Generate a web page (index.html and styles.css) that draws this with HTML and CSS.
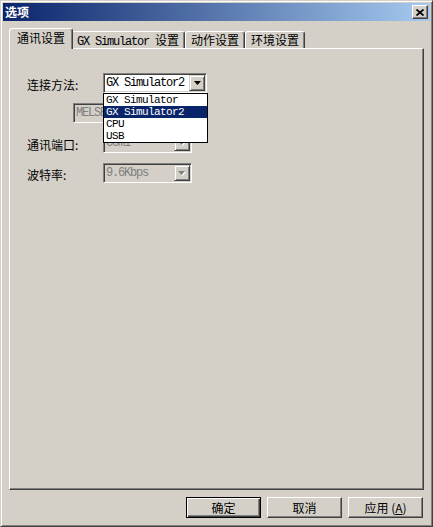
FILE: index.html
```html
<!DOCTYPE html>
<html>

<head>
    <meta charset="utf-8">
    <title>选项</title>
    <link rel="stylesheet" href="styles.css">
</head>

<body>
    <div class="window">
        <div class="titlebar">
            <span class="title">选项</span>
            <button class="close-btn">
                <svg width="8" height="7" viewBox="0 0 8 7">
                    <path d="M0.5 0.5 L7.5 6.5 M7.5 0.5 L0.5 6.5" stroke="#000" stroke-width="1.7" fill="none"/>
                </svg>
            </button>
        </div>

        <div class="content">
            <!-- tab strip -->
            <div class="tabs">
                <div class="tab active">通讯设置</div>
                <div class="tab"><span class="en">GX Simulator </span>设置</div>
                <div class="tab">动作设置</div>
                <div class="tab">环境设置</div>
            </div>

            <div class="panel">
                <div class="row">
                    <label class="label">连接方法:</label>
                    <div class="combo">
                        <span class="combo-text en">GX Simulator2</span>
                        <span class="arrow-btn">
                            <svg width="7" height="4" viewBox="0 0 7 4"><polygon points="0,0 7,0 3.5,4" fill="#000"/></svg>
                        </span>
                        <ul class="dropdown">
                            <li class="en">GX Simulator</li>
                            <li class="en selected">GX Simulator2</li>
                            <li class="en">CPU</li>
                            <li class="en">USB</li>
                        </ul>
                    </div>
                </div>

                <div class="row">
                    <div class="edit en">MELSEC</div>
                </div>

                <div class="row">
                    <label class="label">通讯端口:</label>
                    <div class="combo short disabled">
                        <span class="combo-text en">Com1</span>
                        <span class="arrow-btn">
                            <svg width="8" height="5" viewBox="0 0 8 5"><polygon points="1,1 8,1 4.5,5" fill="#fff"/><polygon points="0,0 7,0 3.5,4" fill="#808080"/></svg>
                        </span>
                    </div>
                </div>

                <div class="row">
                    <label class="label">波特率:</label>
                    <div class="combo short disabled">
                        <span class="combo-text en">9.6Kbps</span>
                        <span class="arrow-btn">
                            <svg width="8" height="5" viewBox="0 0 8 5"><polygon points="1,1 8,1 4.5,5" fill="#fff"/><polygon points="0,0 7,0 3.5,4" fill="#808080"/></svg>
                        </span>
                    </div>
                </div>
            </div>

            <div class="buttons">
                <button class="btn default">确定</button>
                <button class="btn">取消</button>
                <button class="btn">应用 (<u>A</u>)</button>
            </div>
        </div>
    </div>
</body>

</html>
```

FILE: styles.css
```css
body {
    margin: 0;
    background-color: #d4d0c8;
    font-family: "Noto Sans CJK SC", sans-serif;
    font-size: 12px;
    color: #000;
}

.en {
    font-family: "Liberation Mono", monospace;
    font-size: 12px;
    letter-spacing: -1.2px;
}

.window {
    width: 433px;
    height: 527px;
    box-sizing: border-box;
    border: 1px solid;
    border-color: #d4d0c8 #404040 #404040 #d4d0c8;
    box-shadow: inset 1px 1px #fff, inset -1px -1px #808080;
    padding: 2px;
    display: flex;
    flex-direction: column;
}

.titlebar {
    height: 18px;
    flex: none;
    display: flex;
    align-items: center;
    justify-content: space-between;
    padding: 0 2px;
    background: linear-gradient(to right, #0a246a, #a6caf0);
    color: #fff;
    font-weight: bold;
}

.title {
    line-height: 18px;
}

.close-btn {
    width: 16px;
    height: 14px;
    padding: 0;
    box-sizing: border-box;
    border: 1px solid;
    border-color: #fff #404040 #404040 #fff;
    box-shadow: inset -1px -1px #808080;
    background-color: #d4d0c8;
    display: flex;
    align-items: center;
    justify-content: center;
}

.content {
    flex: 1;
    display: flex;
    flex-direction: column;
    padding: 7px 6px 6px;
}

.tabs {
    display: flex;
    align-items: flex-end;
    height: 20px;
    padding-left: 2px;
}

.tab {
    height: 17px;
    box-sizing: border-box;
    padding: 0 5px;
    border: 1px solid;
    border-bottom: none;
    border-color: #fff #404040 transparent #fff;
    box-shadow: inset -1px 0 #808080;
    border-radius: 3px 3px 0 0;
    line-height: 16px;
    background-color: #d4d0c8;
    white-space: nowrap;
}

.tab.active {
    height: 21px;
    margin: 0 -2px -1px;
    padding: 0 7px;
    line-height: 18px;
    position: relative;
    z-index: 1;
}

.panel {
    height: 442px;
    box-sizing: border-box;
    border: 1px solid;
    border-color: #fff #404040 #404040 #fff;
    box-shadow: inset -1px -1px #808080;
    padding: 24px 0 0 17px;
}

.row {
    display: flex;
    align-items: center;
    height: 20px;
}

.row + .row {
    margin-top: 10px;
}

.label {
    width: 76px;
    padding-top: 3px;
}

.combo {
    position: relative;
    width: 104px;
    height: 20px;
    box-sizing: border-box;
    border: 1px solid;
    border-color: #808080 #fff #fff #808080;
    box-shadow: inset 1px 1px #404040, inset -1px -1px #d4d0c8;
    background-color: #fff;
    padding: 1px;
    display: flex;
    align-items: center;
}

.combo.short {
    width: 89px;
}

.combo.disabled {
    background-color: #d4d0c8;
    color: #808080;
}

.combo-text {
    flex: 1;
    padding-left: 1px;
    line-height: 16px;
}

.arrow-btn {
    width: 16px;
    height: 16px;
    box-sizing: border-box;
    border: 1px solid;
    border-color: #d4d0c8 #404040 #404040 #d4d0c8;
    box-shadow: inset 1px 1px #fff, inset -1px -1px #808080;
    background-color: #d4d0c8;
    display: flex;
    align-items: center;
    justify-content: center;
}

.dropdown {
    position: absolute;
    left: -1px;
    top: 19px;
    width: 105px;
    box-sizing: border-box;
    margin: 0;
    padding: 0;
    list-style: none;
    border: 1px solid #000;
    background-color: #fff;
    color: #000;
    z-index: 5;
}

.dropdown li {
    height: 12px;
    line-height: 12px;
    padding-left: 2px;
    font-size: 11px;
    letter-spacing: -0.6px;
    overflow: hidden;
}

.dropdown li.selected {
    background-color: #0a246a;
    color: #fff;
}

.edit {
    margin-left: 46px;
    width: 117px;
    height: 20px;
    box-sizing: border-box;
    border: 1px solid;
    border-color: #808080 #fff #fff #808080;
    box-shadow: inset 1px 1px #404040, inset -1px -1px #d4d0c8;
    background-color: #d4d0c8;
    color: #808080;
    padding: 1px 2px;
    line-height: 16px;
}

.buttons {
    display: flex;
    justify-content: flex-end;
    gap: 6px;
    margin-top: 7px;
    padding-right: 1px;
}

.btn {
    width: 75px;
    height: 21px;
    box-sizing: border-box;
    padding: 0;
    font-family: inherit;
    font-size: 12px;
    color: #000;
    background-color: #d4d0c8;
    border: 1px solid;
    border-color: #fff #404040 #404040 #fff;
    box-shadow: inset -1px -1px #808080;
}

.btn.default {
    border-color: #000;
    box-shadow: inset 1px 1px #fff, inset -1px -1px #404040, inset -2px -2px #808080;
}
```
